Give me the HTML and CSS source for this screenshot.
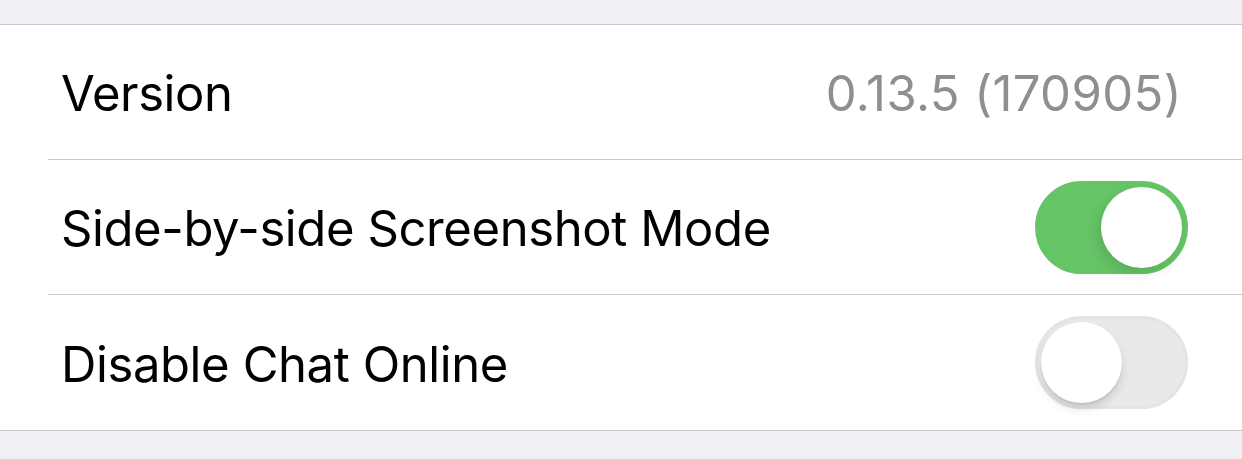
FILE: index.html
```html
<!DOCTYPE html>
<html lang="en">
<head>
    <meta charset="UTF-8">
    <meta name="viewport" content="width=device-width, initial-scale=1.0">
    <title>Settings</title>
    <link rel="stylesheet" href="styles.css">
</head>
<body>
    <div class="section-header"></div>

    <div class="group">
        <div class="row">
            <span class="label">Version</span>
            <span class="value">0.13.5 (170905)</span>
        </div>
        <div class="row">
            <span class="label">Side-by-side Screenshot Mode</span>
            <div class="switch on"><div class="knob"></div></div>
        </div>
        <div class="row">
            <span class="label">Disable Chat Online</span>
            <div class="switch"><div class="knob"></div></div>
        </div>
    </div>
</body>
</html>
```

FILE: styles.css
```css
body {
    margin: 0;
    background-color: #efeff4;
    font-family: Inter, "Noto Sans", sans-serif;
    -webkit-font-smoothing: antialiased;
}
.section-header {
    height: 24px;
}
.group {
    background: white;
    border-top: 1px solid #c8c7cc;
    border-bottom: 1px solid #c8c7cc;
}
.row {
    display: flex;
    align-items: center;
    justify-content: space-between;
    box-sizing: border-box;
    height: 135px;
    margin-left: 48px;
    padding-left: 13px;
    padding-right: 54px;
    padding-top: 3px;
    border-bottom: 1px solid #c8c7cc;
}
.row:last-child {
    border-bottom: none;
}
.label {
    font-size: 49px;
    color: #000;
    letter-spacing: -0.4px;
}
.value {
    font-size: 49px;
    color: #8e8e93;
    letter-spacing: 0.4px;
    margin-right: 6px;
}
.switch {
    position: relative;
    width: 153px;
    height: 93px;
    box-sizing: border-box;
    border-radius: 47px;
    background-color: #e9e9eb;
    border: 3px solid #e4e4e7;
    margin-top: -3px;
}
.switch .knob {
    position: absolute;
    top: 3px;
    left: 3px;
    width: 81px;
    height: 81px;
    border-radius: 50%;
    background: white;
    box-shadow: 0 6px 10px rgba(0,0,0,0.12), 0 2px 2px rgba(0,0,0,0.08);
}
.switch.on {
    background-color: #65c466;
    border-color: #65c466;
}
.switch.on .knob {
    left: auto;
    right: 3px;
    box-shadow: -4px 6px 12px rgba(0,0,0,0.10);
}
```
